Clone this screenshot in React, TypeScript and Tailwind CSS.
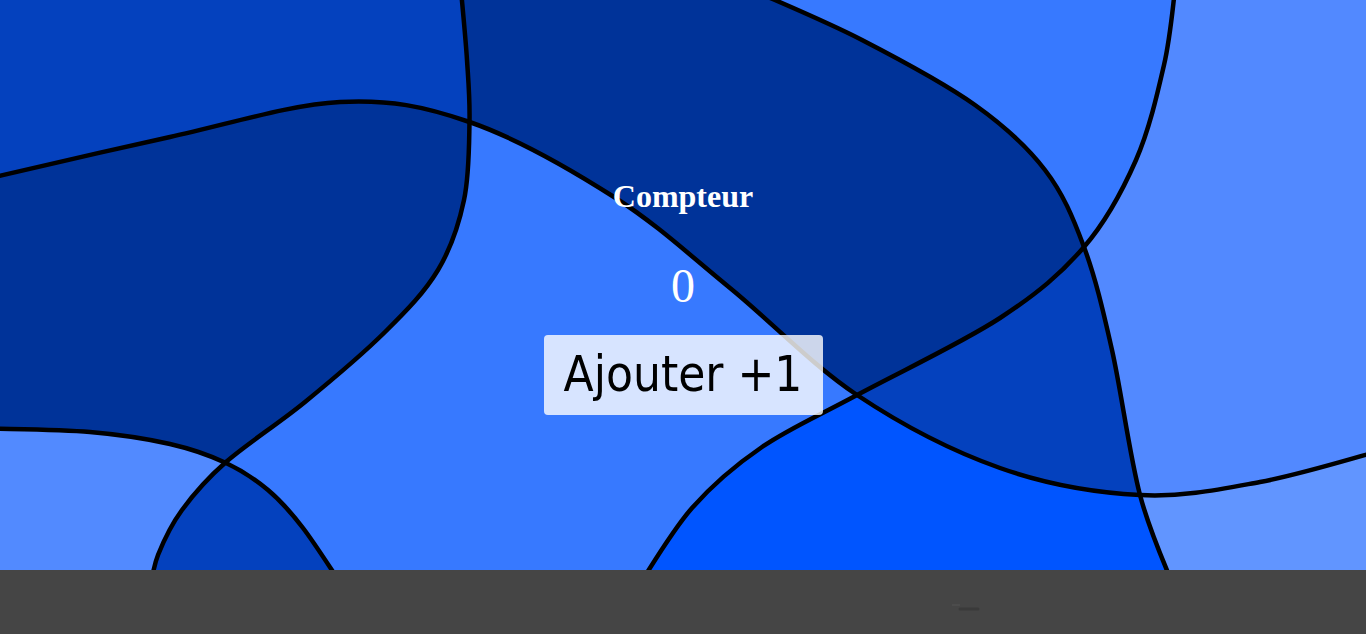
import React from "react";

type P = [number, number];

function smooth(pts: P[]): string {
  let d = `M ${pts[0][0]} ${pts[0][1]}`;
  for (let i = 0; i < pts.length - 1; i++) {
    const p0 = pts[i - 1] || pts[i];
    const p1 = pts[i];
    const p2 = pts[i + 1];
    const p3 = pts[i + 2] || pts[i + 1];
    const c1x = p1[0] + (p2[0] - p0[0]) / 6;
    const c1y = p1[1] + (p2[1] - p0[1]) / 6;
    const c2x = p2[0] - (p3[0] - p1[0]) / 6;
    const c2y = p2[1] - (p3[1] - p1[1]) / 6;
    d += ` C ${c1x.toFixed(1)} ${c1y.toFixed(1)} ${c2x.toFixed(1)} ${c2y.toFixed(1)} ${p2[0]} ${p2[1]}`;
  }
  return d;
}

const A: P[] = [
  [461, -10], [467, 60], [469.5, 122], [464, 200], [438, 270], [385, 332], [305, 402],
  [226, 462], [182, 510], [158, 555], [150, 590],
];
const B: P[] = [
  [-10, 178], [170, 137], [340, 102], [469.5, 122], [614, 197], [730, 288], [857, 395],
  [1000, 468], [1140, 495], [1260, 482], [1376, 452],
];
const C: P[] = [
  [752, -10], [862, 40], [975, 105], [1045, 170], [1084, 247], [1112, 350], [1140, 495],
  [1175, 590],
];
const D: P[] = [
  [1175, -10], [1164, 65], [1136, 160], [1084, 247], [1000, 318], [857, 395], [762, 447],
  [692, 508], [636, 590],
];
const E: P[] = [
  [-10, 428.5], [90, 432], [170, 444], [226, 463], [268, 490], [303, 528], [345, 590],
];

const sA = smooth(A);
const sB = smooth(B);
const sC = smooth(C);
const sD = smooth(D);
const sE = smooth(E);

const sides: Record<string, string> = {
  lA: sA + " L 150 620 L -20 620 L -20 -20 Z",
  rA: sA + " L 150 620 L 1390 620 L 1390 -20 Z",
  uB: sB + " L 1390 452 L 1390 -20 L -20 -20 L -20 178 Z",
  dB: sB + " L 1390 452 L 1390 620 L -20 620 L -20 178 Z",
  lC: sC + " L 1175 620 L -20 620 L -20 -20 L 752 -20 Z",
  rC: sC + " L 1175 620 L 1390 620 L 1390 -20 L 752 -20 Z",
  lD: sD + " L 636 620 L -20 620 L -20 -20 L 1175 -20 Z",
  rD: sD + " L 636 620 L 1390 620 L 1390 -20 L 1175 -20 Z",
  uE: sE + " L 345 620 L 1390 620 L 1390 -20 L -20 -20 L -20 428.5 Z",
  dE: sE + " L 345 620 L -20 620 L -20 428.5 Z",
};

function Region({ clips, fill }: { clips: string[]; fill: string }) {
  let node: React.ReactNode = <rect x={-20} y={-20} width={1410} height={640} fill={fill} />;
  for (const c of clips) {
    node = <g clipPath={`url(#clip-${c})`}>{node}</g>;
  }
  return <>{node}</>;
}

function Background() {
  return (
    <svg className="absolute inset-0" width="1366" height="570" viewBox="0 0 1366 570">
      <defs>
        {Object.entries(sides).map(([k, d]) => (
          <clipPath id={`clip-${k}`} key={k}>
            <path d={d} />
          </clipPath>
        ))}
      </defs>
      <rect x={0} y={0} width={1366} height={570} fill="#3779FF" />
      <Region clips={["lA", "uB"]} fill="#0441BE" />
      <Region clips={["lA", "dB", "uE"]} fill="#003399" />
      <Region clips={["lA", "dE"]} fill="#528AFF" />
      <Region clips={["rA", "dE"]} fill="#0441BE" />
      <Region clips={["rA", "uB", "lC", "lD"]} fill="#003399" />
      <Region clips={["rC", "lD"]} fill="#3779FF" />
      <Region clips={["rD", "rC", "uB"]} fill="#5289FF" />
      <Region clips={["rC", "dB"]} fill="#6195FF" />
      <Region clips={["rD", "lC", "uB"]} fill="#0441BE" />
      <Region clips={["rD", "lC", "dB"]} fill="#0055FF" />
      <g fill="none" stroke="#000" strokeWidth={4.5}>
        <path d={sA} />
        <path d={sB} />
        <path d={sC} />
        <path d={sD} />
        <path d={sE} />
      </g>
    </svg>
  );
}

export default function App() {
  return (
    <div className="flex h-[634px] w-[1366px] flex-col overflow-hidden">
      <div className="relative h-[570px] w-full overflow-hidden">
        <Background />
        <div className="relative flex flex-col items-center pt-[178px]">
          <h1
            className="text-[32px] font-bold leading-[37px] text-white"
            style={{ fontFamily: '"Liberation Serif", "Times New Roman", serif' }}
          >
            Compteur
          </h1>
          <p
            className="mt-[43px] text-[48px] leading-[55px] text-white"
            style={{ fontFamily: '"Liberation Serif", "Times New Roman", serif' }}
          >
            0
          </p>
          <button
            className="mt-[22px] flex h-[80px] w-[279px] items-center justify-center rounded-[4px] bg-white/80 text-[49px] leading-[56px] text-black"
            style={{ fontFamily: '"DejaVu Sans Condensed", "DejaVu Sans", sans-serif', fontStretch: "condensed" }}
          >
            Ajouter +1
          </button>
        </div>
      </div>
      <div className="relative h-[64px] w-full bg-[#454545]">
        <svg className="absolute left-[950px] top-[32px]" width="34" height="14" viewBox="0 0 34 14">
          <path d="M2 3 H10" stroke="#555" strokeWidth={1} />
          <path d="M10 7 H28" stroke="#3a3a3a" strokeWidth={3} strokeLinecap="round" />
        </svg>
      </div>
    </div>
  );
}
